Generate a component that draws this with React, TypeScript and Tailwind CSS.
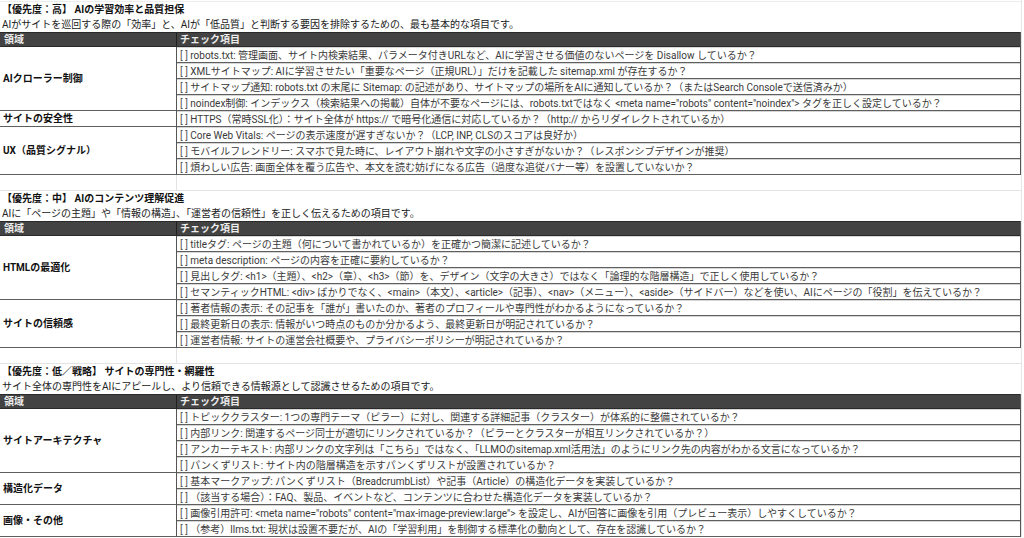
import React from 'react';

type Group = { label: string; items: string[] };
type Section = { title: string; desc: string; groups: Group[] };

const sections: Section[] = [
  {
    title: '【優先度：高】 AIの学習効率と品質担保',
    desc: 'AIがサイトを巡回する際の「効率」と、AIが「低品質」と判断する要因を排除するための、最も基本的な項目です。',
    groups: [
      {
        label: 'AIクローラー制御',
        items: [
          'robots.txt: 管理画面、サイト内検索結果、パラメータ付きURLなど、AIに学習させる価値のないページを Disallow しているか？',
          'XMLサイトマップ: AIに学習させたい「重要なページ（正規URL）」だけを記載した sitemap.xml が存在するか？',
          'サイトマップ通知: robots.txt の末尾に Sitemap: の記述があり、サイトマップの場所をAIに通知しているか？（またはSearch Consoleで送信済みか）',
          'noindex制御: インデックス（検索結果への掲載）自体が不要なページには、robots.txtではなく <meta name="robots" content="noindex"> タグを正しく設定しているか？',
        ],
      },
      {
        label: 'サイトの安全性',
        items: ['HTTPS（常時SSL化）：サイト全体が https:// で暗号化通信に対応しているか？（http:// からリダイレクトされているか）'],
      },
      {
        label: 'UX（品質シグナル）',
        items: [
          'Core Web Vitals: ページの表示速度が遅すぎないか？（LCP, INP, CLSのスコアは良好か）',
          'モバイルフレンドリー: スマホで見た時に、レイアウト崩れや文字の小さすぎがないか？（レスポンシブデザインが推奨）',
          '煩わしい広告: 画面全体を覆う広告や、本文を読む妨げになる広告（過度な追従バナー等）を設置していないか？',
        ],
      },
    ],
  },
  {
    title: '【優先度：中】 AIのコンテンツ理解促進',
    desc: 'AIに「ページの主題」や「情報の構造」、「運営者の信頼性」を正しく伝えるための項目です。',
    groups: [
      {
        label: 'HTMLの最適化',
        items: [
          'titleタグ: ページの主題（何について書かれているか）を正確かつ簡潔に記述しているか？',
          'meta description: ページの内容を正確に要約しているか？',
          '見出しタグ: <h1>（主題）、<h2>（章）、<h3>（節）を、デザイン（文字の大きさ）ではなく「論理的な階層構造」で正しく使用しているか？',
          'セマンティックHTML: <div> ばかりでなく、<main>（本文）、<article>（記事）、<nav>（メニュー）、<aside>（サイドバー）などを使い、AIにページの「役割」を伝えているか？',
        ],
      },
      {
        label: 'サイトの信頼感',
        items: [
          '著者情報の表示: その記事を「誰が」書いたのか、著者のプロフィールや専門性がわかるようになっているか？',
          '最終更新日の表示: 情報がいつ時点のものか分かるよう、最終更新日が明記されているか？',
          '運営者情報: サイトの運営会社概要や、プライバシーポリシーが明記されているか？',
        ],
      },
    ],
  },
  {
    title: '【優先度：低／戦略】 サイトの専門性・網羅性',
    desc: 'サイト全体の専門性をAIにアピールし、より信頼できる情報源として認識させるための項目です。',
    groups: [
      {
        label: 'サイトアーキテクチャ',
        items: [
          'トピッククラスター: 1つの専門テーマ（ピラー）に対し、関連する詳細記事（クラスター）が体系的に整備されているか？',
          '内部リンク: 関連するページ同士が適切にリンクされているか？（ピラーとクラスターが相互リンクされているか？）',
          'アンカーテキスト: 内部リンクの文字列は「こちら」ではなく、「LLMOのsitemap.xml活用法」のようにリンク先の内容がわかる文言になっているか？',
          'パンくずリスト: サイト内の階層構造を示すパンくずリストが設置されているか？',
        ],
      },
      {
        label: '構造化データ',
        items: [
          '基本マークアップ: パンくずリスト（BreadcrumbList）や記事（Article）の構造化データを実装しているか？',
          '（該当する場合）：FAQ、製品、イベントなど、コンテンツに合わせた構造化データを実装しているか？',
        ],
      },
      {
        label: '画像・その他',
        items: [
          '画像引用許可: <meta name="robots" content="max-image-preview:large"> を設定し、AIが回答に画像を引用（プレビュー表示）しやすくしているか？',
          '（参考）llms.txt: 現状は設置不要だが、AIの「学習利用」を制御する標準化の動向として、存在を認識しているか？',
        ],
      },
    ],
  },
];

function BlankRow() {
  return (
    <div className="flex h-[16px] border-b border-[#e3e3e3]">
      <div className="w-[177px] border-r border-[#e3e3e3]" />
      <div className="flex-1" />
    </div>
  );
}

function SectionBlock({ section, last }: { section: Section; last: boolean }) {
  return (
    <>
      <div className="h-[15px] flex items-center pl-[2px] font-bold text-[10px] text-[#111] whitespace-nowrap">
        {section.title}
      </div>
      <div className="h-[15px] flex items-center pl-[2px] text-[10px] text-[#222] whitespace-nowrap">
        {section.desc}
      </div>

      <div className="w-[1021px] border-r border-[#555]">
        <div className="flex h-[15px] bg-[#434343] border-y border-[#2a2a2a] text-[10px] font-bold text-[#ececec]">
          <div className="w-[177px] border-r border-[#1f1f1f] flex items-center pl-[4px]">領域</div>
          <div className="flex-1 flex items-center pl-[3px]">チェック項目</div>
        </div>

        {section.groups.map((g) => (
          <div key={g.label} className="flex">
            <div className="w-[177px] border-r border-[#555] border-b border-b-[#5f5f5f] flex items-center pl-[3px] text-[10px] font-bold text-[#111]">
              {g.label}
            </div>
            <div className="flex-1 flex flex-col">
              {g.items.map((item) => (
                <div
                  key={item}
                  className="h-[16px] border-t border-[#d6d6d6] border-b border-b-[#5f5f5f] flex items-center pl-[3px] text-[10px] text-[#3a3a3a] whitespace-nowrap overflow-hidden"
                >
                  <span className="text-[#555]">[ ]</span>&nbsp;{item}
                </div>
              ))}
            </div>
          </div>
        ))}
      </div>

      {!last && <BlankRow />}
    </>
  );
}

export default function App() {
  return (
    <div
      className="h-[538px] w-[1024px] overflow-hidden bg-white"
      style={{ fontFamily: 'Roboto, "Noto Sans CJK JP", sans-serif' }}
    >
      <div className="w-[1022px] border-r border-[#e6e6e6] pt-px">
        <div className="border-t border-[#ececec]" />
        {sections.map((s, i) => (
          <SectionBlock key={s.title} section={s} last={i === sections.length - 1} />
        ))}
      </div>
    </div>
  );
}
